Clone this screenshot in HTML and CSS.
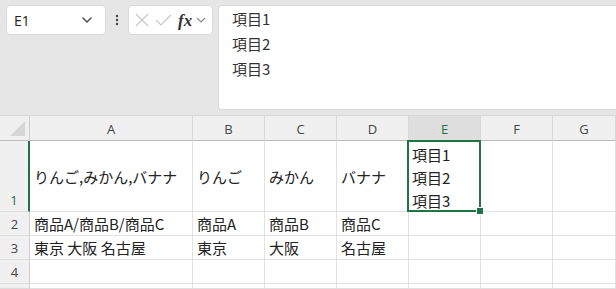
FILE: index.html
```html
<!DOCTYPE html>
<html lang="ja">
<head>
    <meta charset="UTF-8">
    <title>Sheet</title>
    <link rel="stylesheet" href="styles.css">
</head>
<body>
    <div class="toolbar">
        <div class="namebox">
            <span>E1</span>
            <svg width="12" height="8" viewBox="0 0 12 8"><path d="M1.5 1.5 L6 6 L10.5 1.5" fill="none" stroke="#444" stroke-width="1.3"/></svg>
        </div>
        <div class="dots">
            <svg width="4" height="12" viewBox="0 0 4 12"><circle cx="2" cy="2" r="1.2" fill="#444"/><circle cx="2" cy="6" r="1.2" fill="#444"/><circle cx="2" cy="10" r="1.2" fill="#444"/></svg>
        </div>
        <div class="fxbox">
            <svg width="16" height="16" viewBox="0 0 16 16"><path d="M2 2 L14 14 M14 2 L2 14" stroke="#c8c8c8" stroke-width="1.2" fill="none"/></svg>
            <svg width="18" height="16" viewBox="0 0 18 16"><path d="M2 8 L7 13 L17 3" stroke="#c8c8c8" stroke-width="1.2" fill="none"/></svg>
            <span class="fx">fx</span>
            <svg width="10" height="8" viewBox="0 0 10 8"><path d="M1 2 L5 6 L9 2" fill="none" stroke="#888" stroke-width="1.1"/></svg>
        </div>
        <div class="formula">
            <div>項目1</div>
            <div>項目2</div>
            <div>項目3</div>
        </div>
    </div>

    <div class="sheet">
        <div class="corner"><span class="tri"></span></div>
        <div class="colhead">A</div>
        <div class="colhead">B</div>
        <div class="colhead">C</div>
        <div class="colhead">D</div>
        <div class="colhead active">E</div>
        <div class="colhead">F</div>
        <div class="colhead">G</div>

        <div class="rowhead active bottom">1</div>
        <div class="cell">りんご,みかん,バナナ</div>
        <div class="cell">りんご</div>
        <div class="cell">みかん</div>
        <div class="cell">バナナ</div>
        <div class="cell wrap selected">
            <div>項目1</div>
            <div>項目2</div>
            <div>項目3</div>
        </div>
        <div class="cell"></div>
        <div class="cell"></div>

        <div class="rowhead">2</div>
        <div class="cell">商品A/商品B/商品C</div>
        <div class="cell">商品A</div>
        <div class="cell">商品B</div>
        <div class="cell">商品C</div>
        <div class="cell"></div>
        <div class="cell"></div>
        <div class="cell"></div>

        <div class="rowhead">3</div>
        <div class="cell">東京 大阪 名古屋</div>
        <div class="cell">東京</div>
        <div class="cell">大阪</div>
        <div class="cell">名古屋</div>
        <div class="cell"></div>
        <div class="cell"></div>
        <div class="cell"></div>

        <div class="rowhead">4</div>
        <div class="cell"></div>
        <div class="cell"></div>
        <div class="cell"></div>
        <div class="cell"></div>
        <div class="cell"></div>
        <div class="cell"></div>
        <div class="cell"></div>

        <div class="rowhead"></div>
        <div class="cell"></div>
        <div class="cell"></div>
        <div class="cell"></div>
        <div class="cell"></div>
        <div class="cell"></div>
        <div class="cell"></div>
        <div class="cell"></div>
    </div>
</body>
</html>
```

FILE: styles.css
```css
body {
    margin: 0;
    width: 616px;
    height: 289px;
    overflow: hidden;
    background-color: #ffffff;
    font-family: "Noto Sans CJK JP", "Noto Sans", sans-serif;
    color: #222;
}

.toolbar {
    height: 116px;
    box-sizing: border-box;
    background-color: #e6e6e6;
    display: flex;
    align-items: flex-start;
    padding: 5px 0 0 6px;
    border-bottom: 1px solid #d6d6d6;
}

.namebox {
    width: 100px;
    height: 30px;
    box-sizing: border-box;
    background-color: white;
    border: 1px solid #dadada;
    border-radius: 4px;
    display: flex;
    align-items: center;
    justify-content: space-between;
    padding: 0 12px 0 7px;
    font-family: "Open Sans", "Noto Sans", sans-serif;
    font-size: 14px;
    color: #222;
}

.dots {
    width: 22px;
    height: 30px;
    display: flex;
    align-items: center;
    justify-content: center;
}

.fxbox {
    width: 85px;
    height: 30px;
    box-sizing: border-box;
    background-color: white;
    border: 1px solid #dadada;
    border-radius: 4px;
    display: flex;
    align-items: center;
    gap: 4px;
    padding: 0 0 0 5px;
}

.fx {
    font-family: "Liberation Serif", serif;
    font-style: italic;
    font-weight: bold;
    font-size: 17px;
    color: #333;
    margin-left: 2px;
    line-height: 1;
}

.formula {
    flex: 1;
    height: 105px;
    margin-left: 5px;
    box-sizing: border-box;
    background-color: white;
    border: 1px solid #dadada;
    border-right: none;
    border-radius: 4px 0 0 4px;
    padding: 0 0 0 13px;
    font-size: 15px;
    line-height: 25px;
    color: #333;
}

.sheet {
    display: grid;
    grid-template-columns: 30px 163px 72px 72px 72px 72px 72px 1fr;
    grid-template-rows: 25px 71px 24px 24px 24px 1fr;
    height: 173px;
    font-size: 15px;
}

.sheet > div {
    box-sizing: border-box;
}

.corner {
    background-color: #f0f0f0;
    border-right: 1px solid #cfcfcf;
    border-bottom: 1px solid #bdbdbd;
    position: relative;
}

.tri {
    position: absolute;
    right: 4px;
    bottom: 4px;
    width: 0;
    height: 0;
    border-left: 15px solid transparent;
    border-bottom: 15px solid #d6d6d6;
}

.colhead {
    background-color: #f0f0f0;
    border-right: 1px solid #d8d8d8;
    border-bottom: 1px solid #bdbdbd;
    display: flex;
    align-items: center;
    justify-content: center;
    font-family: "Open Sans", "Noto Sans", sans-serif;
    font-size: 13px;
    color: #444;
    padding-top: 1px;
}

.colhead.active {
    background-color: #dedede;
    color: #1f6e43;
}

.rowhead {
    background-color: #f0f0f0;
    border-right: 1px solid #cfcfcf;
    border-bottom: 1px solid #dcdcdc;
    display: flex;
    align-items: center;
    justify-content: center;
    font-family: "Open Sans", "Noto Sans", sans-serif;
    font-size: 13px;
    color: #444;
}

.rowhead.active {
    color: #1f6e43;
    border-right: 2px solid #217346;
}

.rowhead.bottom {
    align-items: flex-end;
    padding-bottom: 2px;
}

.cell {
    border-right: 1px solid #e1e1e1;
    border-bottom: 1px solid #e1e1e1;
    display: flex;
    align-items: center;
    padding-left: 4px;
    white-space: nowrap;
    color: #222;
}

.cell.wrap {
    flex-direction: column;
    align-items: flex-start;
    justify-content: flex-start;
    padding-top: 2px;
    padding-left: 3px;
    line-height: 23px;
}

.selected {
    position: relative;
}

.selected::after {
    content: "";
    position: absolute;
    left: -2px;
    top: -1px;
    right: -1px;
    bottom: -1px;
    border: 2px solid #217346;
}

.selected::before {
    content: "";
    position: absolute;
    right: -4px;
    bottom: -4px;
    width: 6px;
    height: 6px;
    background-color: #217346;
    border: 1px solid white;
    z-index: 1;
}
```
